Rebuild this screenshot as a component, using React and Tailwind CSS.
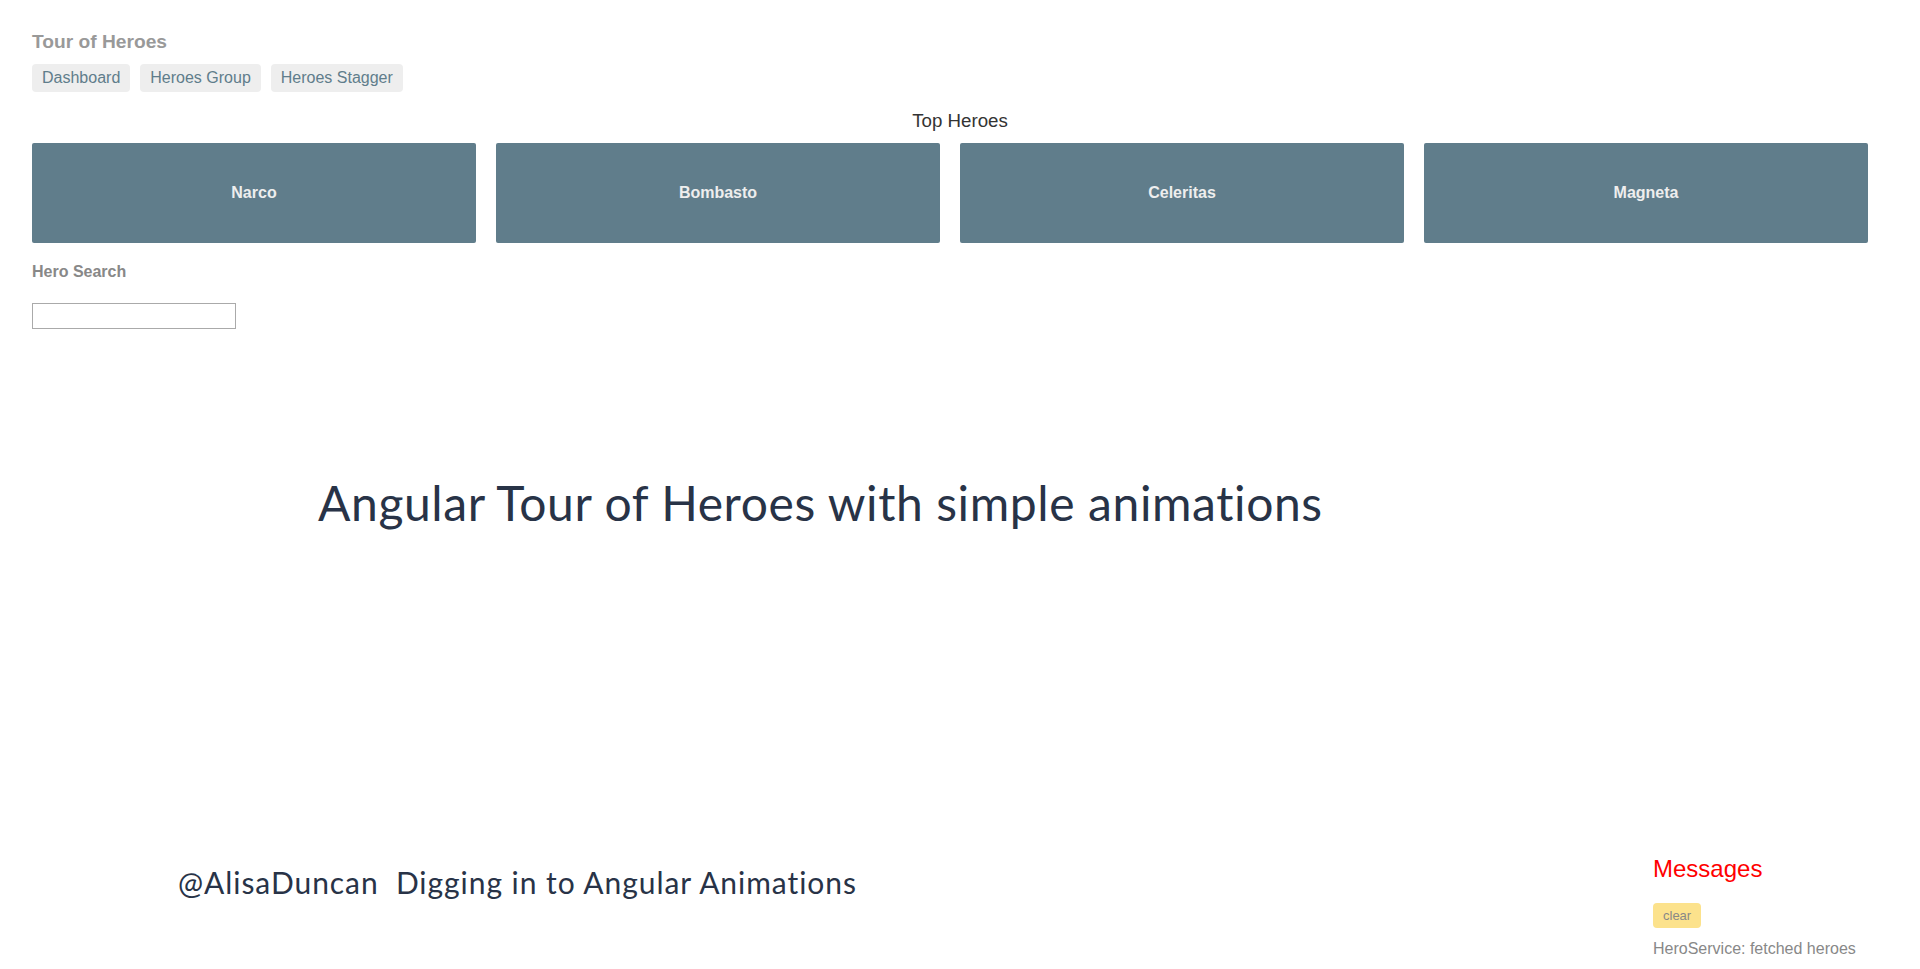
import React from "react";

const heroes = ["Narco", "Bombasto", "Celeritas", "Magneta"];
const links = ["Dashboard", "Heroes Group", "Heroes Stagger"];

const App = () => {
  return (
    <div className="min-h-[969px] bg-white px-8 font-['Liberation_Sans',Arial,sans-serif]">
      <h1 className="pt-[31px] text-[19.2px] leading-[22px] font-bold text-[#999]">Tour of Heroes</h1>
      <nav className="mt-[11px] flex gap-[10px]">
        {links.map((l) => (
          <a key={l} className="rounded px-[10px] py-[5px] text-base leading-[18px] text-[#607d8b] bg-[#eee] cursor-pointer">
            {l}
          </a>
        ))}
      </nav>

      <h3 className="mt-[18px] text-center text-[18.7px] leading-[22px] text-[#333]">Top Heroes</h3>
      <div className="mt-[11px] grid w-[1836px] grid-cols-4 gap-5">
        {heroes.map((h) => (
          <div key={h} className="flex h-[100px] items-center justify-center rounded-[2px] bg-[#607d8b]">
            <h4 className="text-base font-bold text-[#eee]">{h}</h4>
          </div>
        ))}
      </div>

      <div className="mt-[20px]">
        <label className="block text-base leading-[18px] font-bold text-[#888]">Hero Search</label>
        <input type="text" className="mt-[22px] block h-[26px] w-[204px] border border-[#aaa] px-[2px] outline-none" />
      </div>

      <div className="mt-[150px] pl-[286px]">
        <h2 className="font-['Lato',sans-serif] text-[48px] leading-[48px] tracking-[0.6px] text-[#283347]">
          Angular Tour of Heroes with simple animations
        </h2>
      </div>

      <div className="mt-[328px] flex items-start">
        <p className="mt-[12px] pl-[146px] font-['Lato',sans-serif] text-[30px] leading-[30px] tracking-[0.95px] whitespace-pre text-[#283347]">
          {"@AlisaDuncan  Digging in to Angular Animations"}
        </p>
        <div className="ml-auto w-[235px]">
          <h2 className="text-[24px] leading-[28px] text-[#f00]">Messages</h2>
          <button className="mt-[20px] block rounded px-[10px] py-[5px] text-[13px] leading-[15px] text-[#888] bg-[#fce28c]">
            clear
          </button>
          <div className="mt-[12px] text-base leading-[18px] text-[#888]">HeroService: fetched heroes</div>
        </div>
      </div>
    </div>
  );
};

export default App;
